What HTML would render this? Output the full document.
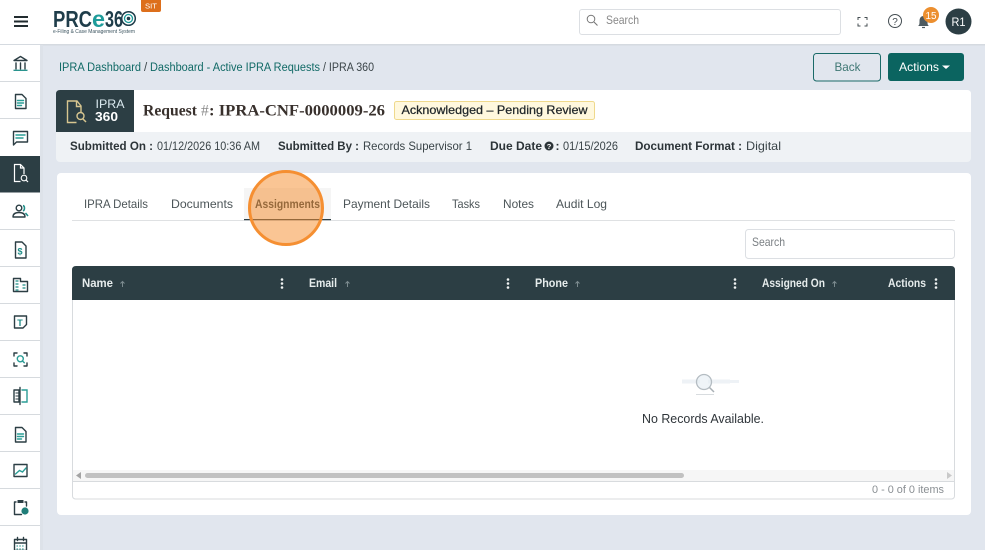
<!DOCTYPE html>
<html lang="en"><head><meta charset="utf-8"><title>IPRA 360</title>
<style>
html,body{margin:0;padding:0;width:985px;height:550px;overflow:hidden;background:#e1e6ee}
svg{display:block}
text{font-family:"Liberation Sans",sans-serif;font-size:12px;fill:#3a4448}
.b{font-weight:700;fill:#2c3438}
.t{fill:#4c5558;font-size:12px}
.h{fill:#e6ecec;font-weight:700;font-size:11.500px}
.i{fill:none;stroke:#2c3e44;stroke-width:1.400;stroke-linejoin:round;stroke-linecap:round}
.g{fill:none;stroke:#2a9d96;stroke-width:1.400;stroke-linecap:round}
</style></head><body>
<svg width="985" height="550" viewBox="0 0 985 550" xmlns="http://www.w3.org/2000/svg">
<rect width="985" height="550" fill="#e1e6ee"/>
<!-- header -->
<rect width="985" height="44" fill="#fff"/>
<rect y="44" width="985" height="1.500" fill="#d5dae0"/>
<path d="M14 17h14M14 21.500h14M14 26h14" stroke="#222c30" stroke-width="2" fill="none"/>
<text x="53" y="27" style="font-size:23.500px;font-weight:700;fill:#1f3d4a" textLength="39" lengthAdjust="spacingAndGlyphs">PRC</text>
<text x="92" y="27" style="font-size:23.500px;font-weight:700;fill:#1e9c9a" textLength="13" lengthAdjust="spacingAndGlyphs">e</text>
<text x="105" y="27" style="font-size:23.500px;font-weight:700;fill:#1f3d4a" textLength="18" lengthAdjust="spacingAndGlyphs">36</text>
<circle cx="128.500" cy="18.500" r="6.800" fill="none" stroke="#1f3d4a" stroke-width="1.500"/><circle cx="128.500" cy="18.500" r="4" fill="none" stroke="#1e9c9a" stroke-width="1.300"/><circle cx="128.500" cy="18.500" r="1.800" fill="#1f3d4a"/>
<text x="53" y="33" style="font-size:5.500px;fill:#3d5560" textLength="82" lengthAdjust="spacingAndGlyphs">e-Filing &amp; Case Management System</text>
<path d="M141 0h20v10q0 2-2 2h-16q-2 0-2-2z" fill="#dd6f1c"/>
<text x="145" y="8.500" style="font-size:7.500px;fill:#fff" textLength="12" lengthAdjust="spacingAndGlyphs">SIT</text>
<rect x="579.500" y="9.500" width="261" height="25" rx="2.500" fill="#fff" stroke="#dcdfe3"/>
<circle cx="591" cy="19" r="3.800" fill="none" stroke="#777" stroke-width="1"/><path d="M594 22l3.500 3.500" stroke="#777" stroke-width="1.100"/>
<text x="606" y="24" style="font-size:12px;fill:#888" textLength="33" lengthAdjust="spacingAndGlyphs">Search</text>
<path d="M858 20v-2.500h2.500M864.500 17.500h2.500v2.500M867 23.500v2.500h-2.500M860.500 26h-2.500v-2.500" fill="none" stroke="#444d52" stroke-width="1"/>
<circle cx="895" cy="21" r="6.500" fill="none" stroke="#444d52" stroke-width="1"/>
<text x="892.300" y="24.800" style="font-size:10px;fill:#444d52">?</text>
<path d="M918 26c1.500-1 1.500-2 1.500-5s1.500-5 4-5 4 2 4 5 0 4 1.500 5z" fill="#4d5a60"/><path d="M922 27.500h3" stroke="#4d5a60" stroke-width="1.200"/>
<circle cx="931" cy="15" r="8" fill="#ec8f2f"/>
<text x="925.500" y="19" style="font-size:10px;fill:#fff" textLength="11" lengthAdjust="spacingAndGlyphs">15</text>
<circle cx="958.500" cy="21.500" r="13" fill="#2c3e44"/>
<text x="951.500" y="26" style="font-size:12px;fill:#fff" textLength="14" lengthAdjust="spacingAndGlyphs">R1</text>
<!-- sidebar -->
<rect y="45" width="40" height="505" fill="#fff"/>
<rect x="40" y="45" width="3" height="505" fill="#dde2e9"/>
<g fill="#d6dade">
<rect y="81" width="40" height="1"/><rect y="118" width="40" height="1"/><rect y="229" width="40" height="1"/><rect y="266" width="40" height="1"/><rect y="303" width="40" height="1"/><rect y="340" width="40" height="1"/><rect y="377" width="40" height="1"/><rect y="414" width="40" height="1"/><rect y="451" width="40" height="1"/><rect y="488" width="40" height="1"/><rect y="525" width="40" height="1"/>
</g>
<rect y="156" width="40" height="36.500" fill="#2c3e44"/>
<!-- bank -->
<path class="i" d="M14 60.500l6.500-4 6.500 4zM16 63v6M20.500 63v6M25 63v6"/><path d="M13.500 70.300h14" stroke="#1f8e88" stroke-width="1.300"/>
<!-- doc -->
<path class="i" d="M15.500 94.500h6.500l4 4v10h-10.500z"/><path class="g" d="M17.500 100.500h6M17.500 103h6M17.500 105.500h4"/>
<!-- chat -->
<path class="i" d="M13.500 131.500h14v10.500h-11l-3 3z"/><path class="g" d="M16 135h9M16 138h7"/>
<!-- doc search active -->
<path d="M24 174v-6l-3.500-3.500h-6v17h6M20.500 164.500v3.500h3.500" fill="none" stroke="#fff" stroke-width="1.200"/><circle cx="24" cy="178" r="2.800" fill="none" stroke="#fff" stroke-width="1.100"/><path d="M26 180l2 2" stroke="#fff" stroke-width="1.200"/>
<!-- users -->
<circle cx="19" cy="208" r="2.800" class="i"/><path class="i" d="M13 217c0-3.500 3-4.500 6-4.500s6 1 6 4.500z"/><path d="M23 205.500c2 .5 2 4.500 0 5.500M25.500 213l2.500 3" stroke="#1f8e88" stroke-width="1.500" fill="none"/>
<!-- doc dollar -->
<path class="i" d="M15.500 242h6.500l4 4v12h-10.500z"/><text x="17.500" y="254.500" style="font-size:9px;fill:#1f8e88;font-weight:700">$</text>
<!-- building -->
<path class="i" d="M13.500 291.500v-13h7v3h7v10z"/><path d="M15.500 281h3M15.500 284h3M15.500 287h3M15.500 290h3M22.500 285h3M22.500 288h3" stroke="#1f8e88" stroke-width="1.200"/>
<!-- T note -->
<path class="i" d="M14.500 316h12v8.500l-3.500 3.500h-8.500z"/><text x="17.200" y="326" style="font-size:9px;fill:#1f8e88;font-weight:700">T</text>
<!-- scan -->
<path class="i" d="M14 356v-3h3M24 353h3v3M27 363v3h-3M17 366h-3v-3"/><circle cx="20.300" cy="358.800" r="3" class="g"/><path class="g" d="M22.500 361l1.800 1.800"/>
<!-- book -->
<path class="i" d="M19 390h-5v12h5zM20 387.500v17"/><path class="g" d="M22 390h5v12h-5"/><path d="M15.500 393h3M15.500 396h3M15.500 399h3" stroke="#2c3e44" stroke-width="1"/>
<!-- doc 2 -->
<path class="i" d="M15.500 427.500h6.500l4 4v10.500h-10.500z"/><path class="g" d="M17.500 434h6M17.500 436.500h6M17.500 439h4"/>
<!-- chart -->
<path class="i" d="M14 464.500h13v12h-13z"/><path class="g" d="M15.500 474l4-3.500 3 1.500 3.500-4"/>
<!-- clipboard -->
<path class="i" d="M16 502h-1.500v12.500h7M25 502h1.500v4"/><rect x="17.500" y="500" width="6" height="3" fill="#2c3e44"/><circle cx="25" cy="511" r="3.600" fill="#1f7d78"/>
<!-- calendar -->
<path class="i" d="M14.500 539.500h12v11h-12zM14.500 543h12M17.500 537.500v3M23.500 537.500v3"/><path d="M16.500 546h8M16.500 549h8" stroke="#1f8e88" stroke-width="1" stroke-dasharray="1.500 1.300"/>
<!-- breadcrumb -->
<text x="59" y="71" style="font-size:11.500px;fill:#116a66" textLength="82" lengthAdjust="spacingAndGlyphs">IPRA Dashboard</text>
<text x="144" y="71" style="font-size:11.500px;fill:#3a4448">/</text>
<text x="150" y="71" style="font-size:11.500px;fill:#116a66" textLength="170" lengthAdjust="spacingAndGlyphs">Dashboard - Active IPRA Requests</text>
<text x="323" y="71" style="font-size:11.500px;fill:#3a4448" textLength="51" lengthAdjust="spacingAndGlyphs">/ IPRA 360</text>
<rect x="813.500" y="53.500" width="67" height="27.500" rx="3" fill="none" stroke="#1a6a68"/>
<text x="834.500" y="71" style="font-size:12px;fill:#3f7774" textLength="26" lengthAdjust="spacingAndGlyphs">Back</text>
<rect x="888" y="53" width="76" height="28" rx="3" fill="#0b6460"/>
<text x="899" y="71" style="font-size:12px;fill:#fff" textLength="40" lengthAdjust="spacingAndGlyphs">Actions</text>
<path d="M942 65.500h8l-4 3.500z" fill="#fff"/>
<!-- request card -->
<rect x="56" y="90" width="915" height="72" rx="4" fill="#eff2f5"/>
<path d="M134 90h833q4 0 4 4v38h-837z" fill="#fff"/>
<path d="M60 90h74v42h-78v-38q0-4 4-4z" fill="#2c3e44"/>
<path d="M81 112v-6l-4-5h-9.500v21.500h9M76.500 101v5.500h4.500" fill="none" stroke="#d8c690" stroke-width="1.400"/>
<circle cx="80.500" cy="116" r="3.500" fill="none" stroke="#d8c690" stroke-width="1.400"/><path d="M83 119l3 3" stroke="#d8c690" stroke-width="1.500"/>
<text x="95.500" y="108" style="font-size:12px;fill:#dbeaf0" textLength="29" lengthAdjust="spacingAndGlyphs">IPRA</text>
<text x="95" y="121" style="font-size:12.500px;font-weight:700;fill:#fff" textLength="23" lengthAdjust="spacingAndGlyphs">360</text>
<text x="143" y="115.500" style="font-family:'Liberation Serif',serif;font-size:15.500px;font-weight:700;fill:#38302c" textLength="54" lengthAdjust="spacingAndGlyphs">Request</text>
<text x="201" y="115.500" style="font-family:'Liberation Serif',serif;font-size:15.500px;fill:#8a8a8a">#</text>
<text x="209" y="115.500" style="font-family:'Liberation Serif',serif;font-size:15.500px;font-weight:700;fill:#38302c" textLength="176" lengthAdjust="spacingAndGlyphs">: IPRA-CNF-0000009-26</text>
<rect x="394.500" y="101.500" width="200" height="18" rx="2" fill="#fff8de" stroke="#efd98c"/>
<text x="401.500" y="114" style="font-size:12px;fill:#1f2528;stroke:#1f2528;stroke-width:.25" textLength="186" lengthAdjust="spacingAndGlyphs">Acknowledged – Pending Review</text>
<text class="b" x="70" y="150" textLength="83" lengthAdjust="spacingAndGlyphs">Submitted On :</text>
<text x="157" y="150" textLength="103" lengthAdjust="spacingAndGlyphs">01/12/2026 10:36 AM</text>
<text class="b" x="278" y="150" textLength="81" lengthAdjust="spacingAndGlyphs">Submitted By :</text>
<text x="363" y="150" textLength="109" lengthAdjust="spacingAndGlyphs">Records Supervisor 1</text>
<text class="b" x="490" y="150" textLength="52" lengthAdjust="spacingAndGlyphs">Due Date</text>
<circle cx="549" cy="146" r="4.500" fill="#2c3438"/><text x="546.800" y="149" style="font-size:7.500px;fill:#fff;font-weight:700">?</text>
<text class="b" x="555.500" y="150">:</text>
<text x="563" y="150" textLength="55" lengthAdjust="spacingAndGlyphs">01/15/2026</text>
<text class="b" x="635" y="150" textLength="107" lengthAdjust="spacingAndGlyphs">Document Format :</text>
<text x="746" y="150" textLength="35" lengthAdjust="spacingAndGlyphs">Digital</text>
<!-- main card -->
<rect x="57" y="173" width="914" height="342" rx="4" fill="#fff"/>
<rect x="244" y="188" width="87" height="32" fill="#f5f5f5"/>
<rect x="72" y="220" width="883" height="1" fill="#dfe1e3"/>
<rect x="244" y="219" width="87" height="1.200" fill="#2c3e44"/>
<text class="t" x="84" y="208" textLength="64" lengthAdjust="spacingAndGlyphs">IPRA Details</text>
<text class="t" x="171" y="208" textLength="62" lengthAdjust="spacingAndGlyphs">Documents</text>
<text class="t" x="343" y="208" textLength="87" lengthAdjust="spacingAndGlyphs">Payment Details</text>
<text class="t" x="452" y="208" textLength="28" lengthAdjust="spacingAndGlyphs">Tasks</text>
<text class="t" x="503" y="208" textLength="31" lengthAdjust="spacingAndGlyphs">Notes</text>
<text class="t" x="556" y="208" textLength="51" lengthAdjust="spacingAndGlyphs">Audit Log</text>
<text x="255" y="208" style="font-size:12px;font-weight:700;fill:#2c3e44" textLength="65" lengthAdjust="spacingAndGlyphs">Assignments</text>
<circle cx="286" cy="208" r="36.500" fill="#f58f32" fill-opacity=".52" stroke="#f58f32" stroke-width="3"/>
<!-- table search -->
<rect x="745.500" y="229.500" width="209" height="29" rx="3" fill="#fff" stroke="#dcdfe3"/>
<text x="752" y="246" style="font-size:12px;fill:#7a7f83" textLength="33" lengthAdjust="spacingAndGlyphs">Search</text>
<!-- table -->
<rect x="72.500" y="270" width="882" height="229" rx="3" fill="#fff" stroke="#d8dbde"/>
<path d="M76 266h875q4 0 4 4v30h-883v-30q0-4 4-4z" fill="#2c3e44"/>
<text class="h" x="82" y="287" textLength="31" lengthAdjust="spacingAndGlyphs">Name</text>
<text class="h" x="309" y="287" textLength="28" lengthAdjust="spacingAndGlyphs">Email</text>
<text class="h" x="535" y="287" textLength="33" lengthAdjust="spacingAndGlyphs">Phone</text>
<text class="h" x="762" y="287" textLength="63" lengthAdjust="spacingAndGlyphs">Assigned On</text>
<text class="h" x="888" y="287" textLength="38" lengthAdjust="spacingAndGlyphs">Actions</text>
<g stroke="#7b8a8e" fill="none" stroke-width="1"><path d="M122.500 287v-5.500M120.500 283.500l2-2 2 2M347.500 287v-5.500M345.500 283.500l2-2 2 2M577.500 287v-5.500M575.500 283.500l2-2 2 2M834.500 287v-5.500M832.500 283.500l2-2 2 2"/></g>
<g fill="#f0f3f3"><circle cx="282" cy="279.500" r="1.300"/><circle cx="282" cy="283.500" r="1.300"/><circle cx="282" cy="287.500" r="1.300"/><circle cx="508" cy="279.500" r="1.300"/><circle cx="508" cy="283.500" r="1.300"/><circle cx="508" cy="287.500" r="1.300"/><circle cx="735" cy="279.500" r="1.300"/><circle cx="735" cy="283.500" r="1.300"/><circle cx="735" cy="287.500" r="1.300"/><circle cx="936" cy="279.500" r="1.300"/><circle cx="936" cy="283.500" r="1.300"/><circle cx="936" cy="287.500" r="1.300"/></g>
<!-- empty state -->
<g fill="#eef2f6"><rect x="682" y="379.500" width="18" height="4"/><rect x="708" y="379.500" width="22" height="4"/><rect x="730" y="380" width="9" height="3"/></g>
<circle cx="704" cy="382" r="7.500" fill="#e4ecf4" fill-opacity=".6" stroke="#b4bcc2" stroke-width="1.300"/>
<path d="M709.500 387.500l4.500 4.500" stroke="#a9b0b5" stroke-width="1.500"/><path d="M696 394.500h18" stroke="#d8dcdf"/>
<text x="642" y="423" style="font-size:12.500px;fill:#2f353a" textLength="122" lengthAdjust="spacingAndGlyphs">No Records Available.</text>
<!-- scrollbar -->
<rect x="73" y="470" width="881" height="11" fill="#f6f6f6"/>
<rect x="73" y="481" width="881" height="1" fill="#d8dbde"/>
<rect x="85" y="473" width="599" height="5" rx="2.500" fill="#c1c1c1"/>
<path d="M81 472v7l-5-3.500z" fill="#a3a3a3"/><path d="M947 472v7l5-3.500z" fill="#c9c9c9"/>
<text x="872" y="493" style="font-size:11px;fill:#8a8f93" textLength="72" lengthAdjust="spacingAndGlyphs">0 - 0 of 0 items</text>
</svg>
</body></html>
